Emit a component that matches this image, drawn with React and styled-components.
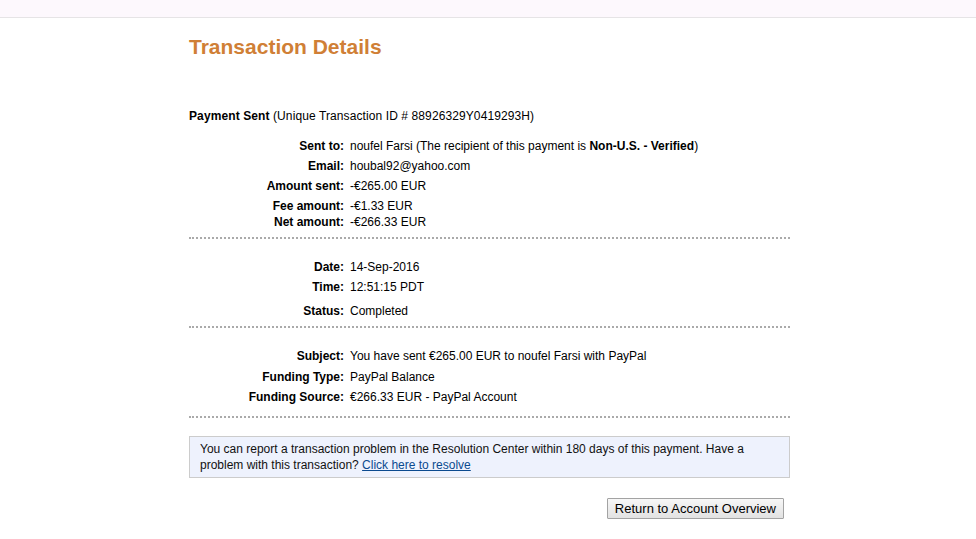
import React from 'react';
import styled, { createGlobalStyle } from 'styled-components';

const GlobalStyle = createGlobalStyle`
  body {
    margin: 0;
    background: #ffffff;
    font-family: "Liberation Sans", Arial, sans-serif;
    color: #000;
  }
`;

const TopBar = styled.div`
  height: 17px;
  background: #fdf8fd;
  border-bottom: 1px solid #e6e4e6;
`;

const Page = styled.div`
  width: 601px;
  margin: 0 auto;
  padding-left: 3px;
`;

const Title = styled.h1`
  margin: 0;
  padding-top: 17px;
  height: 60px;
  font-size: 21px;
  font-weight: bold;
  color: #d07f36;
  line-height: 23px;
`;

const Heading = styled.div`
  font-size: 12px;
  line-height: 14px;
  letter-spacing: 0.1px;
  margin-top: 14px;
  margin-bottom: 16px;
  b {
    font-weight: bold;
  }
`;

const Section = styled.div`
  display: flex;
  flex-direction: column;
  padding: ${(p) => p.$pad || '0'};
  border-bottom: 2px dotted #aaaaaa;
`;

const Row = styled.div`
  display: grid;
  grid-template-columns: 155px 1fr;
  column-gap: 6px;
  height: ${(p) => p.$h || 20}px;
  font-size: 12px;
  line-height: 14px;
`;

const Label = styled.div`
  text-align: right;
  font-weight: bold;
`;

const Value = styled.div`
  b {
    font-weight: bold;
  }
`;

const Notice = styled.div`
  margin-top: 18px;
  background: #eef2fd;
  border: 1px solid #cccccc;
  padding: 4px 10px;
  font-size: 12px;
  line-height: 16px;
  color: #111;
  a {
    color: #0b4a8f;
    text-decoration: underline;
  }
`;

const Actions = styled.div`
  display: flex;
  justify-content: flex-end;
  padding: 20px 6px 0 0;
`;

const Button = styled.button`
  font-family: "Liberation Sans", Arial, sans-serif;
  font-size: 13px;
  height: 21px;
  padding: 0 7px;
  color: #000;
  background: linear-gradient(#f7f7f7, #e2e2e2);
  border: 1px solid #a3a3a3;
  border-radius: 1px;
  cursor: pointer;
`;

export default function App() {
  return (
    <>
      <GlobalStyle />
      <TopBar />
      <Page>
        <Title>Transaction Details</Title>
        <Heading>
          <b>Payment Sent</b> (Unique Transaction ID # 88926329Y0419293H)
        </Heading>
        <Section $pad="0 0 6px 0">
          <Row>
            <Label>Sent to:</Label>
            <Value>
              noufel Farsi (The recipient of this payment is <b>Non-U.S. - Verified</b>)
            </Value>
          </Row>
          <Row>
            <Label>Email:</Label>
            <Value>houbal92@yahoo.com</Value>
          </Row>
          <Row>
            <Label>Amount sent:</Label>
            <Value>-€265.00 EUR</Value>
          </Row>
          <Row $h={16}>
            <Label>Fee amount:</Label>
            <Value>-€1.33 EUR</Value>
          </Row>
          <Row $h={16}>
            <Label>Net amount:</Label>
            <Value>-€266.33 EUR</Value>
          </Row>
        </Section>
        <Section $pad="21px 0 2px 0">
          <Row>
            <Label>Date:</Label>
            <Value>14-Sep-2016</Value>
          </Row>
          <Row $h={24}>
            <Label>Time:</Label>
            <Value>12:51:15 PDT</Value>
          </Row>
          <Row>
            <Label>Status:</Label>
            <Value>Completed</Value>
          </Row>
        </Section>
        <Section $pad="21px 0 6px 0">
          <Row $h={21}>
            <Label>Subject:</Label>
            <Value>You have sent €265.00 EUR to noufel Farsi with PayPal</Value>
          </Row>
          <Row>
            <Label>Funding Type:</Label>
            <Value>PayPal Balance</Value>
          </Row>
          <Row>
            <Label>Funding Source:</Label>
            <Value>€266.33 EUR - PayPal Account</Value>
          </Row>
        </Section>
        <Notice>
          You can report a transaction problem in the Resolution Center within 180 days of this
          payment. Have a problem with this transaction? <a href="#">Click here to resolve</a>
        </Notice>
        <Actions>
          <Button>Return to Account Overview</Button>
        </Actions>
      </Page>
    </>
  );
}
